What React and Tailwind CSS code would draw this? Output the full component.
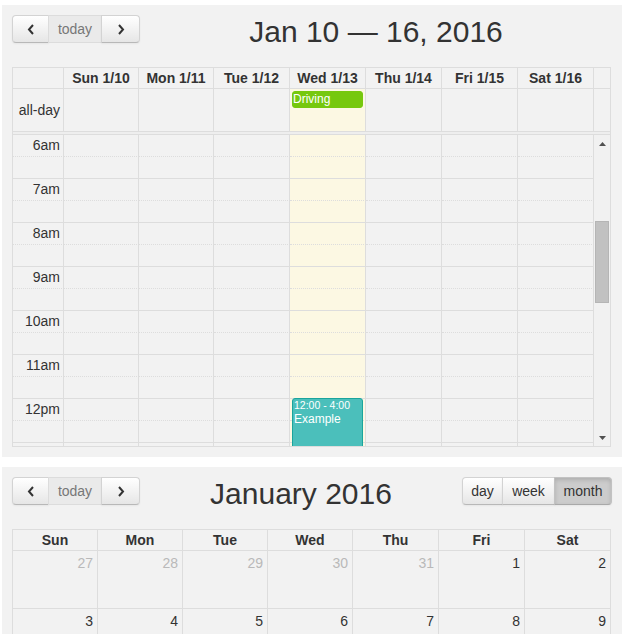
import React from "react";

const FONT = "font-['Liberation_Sans',Arial,Helvetica,sans-serif]";

function Chevron({ dir }) {
  return (
    <svg width="8" height="11" viewBox="0 0 8 11" fill="none" stroke="#333" strokeWidth="2" strokeLinejoin="miter">
      {dir === "left" ? <polyline points="6,1 2,5.5 6,10" /> : <polyline points="2,1 6,5.5 2,10" />}
    </svg>
  );
}

const btnBase = "h-[28px] flex items-center justify-center border text-[14px] leading-none";
const btnNormal =
  "bg-linear-to-b from-white to-[#e6e6e6] border-[#d3d3d3] border-b-[#b8b8b8] shadow-[inset_0_1px_0_rgba(255,255,255,0.2),0_1px_2px_rgba(0,0,0,0.05)] text-[#333]";
const btnDisabled = "bg-[#eaeaea] border-[#dcdcdc] text-[#777]";
const btnActive =
  "bg-[#cccccc] border-[#c2c2c2] border-b-[#a9a9a9] shadow-[inset_0_2px_4px_rgba(0,0,0,0.15),0_1px_2px_rgba(0,0,0,0.05)] text-[#333]";

function NavGroup() {
  return (
    <div className="flex">
      <button className={`${btnBase} ${btnNormal} w-[37px] rounded-l-[4px]`}>
        <Chevron dir="left" />
      </button>
      <button className={`${btnBase} ${btnDisabled} -ml-px w-[54px]`}>today</button>
      <button className={`${btnBase} ${btnNormal} -ml-px w-[39px] rounded-r-[4px]`}>
        <Chevron dir="right" />
      </button>
    </div>
  );
}

function ViewGroup() {
  return (
    <div className="flex">
      <button className={`${btnBase} ${btnNormal} w-[41px] rounded-l-[4px]`}>day</button>
      <button className={`${btnBase} ${btnNormal} -ml-px w-[53px]`}>week</button>
      <button className={`${btnBase} ${btnActive} -ml-px w-[58px] rounded-r-[4px]`}>month</button>
    </div>
  );
}

const weekCols = "grid grid-cols-[51px_75px_75px_76px_76px_76px_76px_76px_17px]";
const slatCols = "grid grid-cols-[51px_75px_75px_76px_76px_76px_76px_76px]";
const days = ["Sun 1/10", "Mon 1/11", "Tue 1/12", "Wed 1/13", "Thu 1/14", "Fri 1/15", "Sat 1/16"];
const hours = ["6am", "7am", "8am", "9am", "10am", "11am", "12pm", ""];

function WeekView() {
  return (
    <div className="w-[599px] border-l border-t border-[#ddd]">
      <div className={weekCols}>
        <div className="h-[21px] border-r border-b border-[#ddd]" />
        {days.map((d) => (
          <div
            key={d}
            className="h-[21px] border-r border-b border-[#ddd] text-center text-[14px] font-bold leading-[20px] text-[#333]"
          >
            {d}
          </div>
        ))}
        <div className="h-[21px] border-r border-b border-[#ddd]" />

        <div className="h-[42px] border-r border-[#ddd] flex items-center justify-end pr-[3px] text-[14px] text-[#333]">
          all-day
        </div>
        {days.map((d, i) => (
          <div key={d} className={`h-[42px] border-r border-[#ddd] ${i === 3 ? "bg-[#fcf8e3]" : ""}`}>
            {i === 3 && (
              <div className="mx-[2px] mt-[2px] h-[17px] rounded-[3px] bg-[#76c80d] border border-[#76c80d] text-white text-[12px] leading-[15px]">
                Driving
              </div>
            )}
          </div>
        ))}
        <div className="h-[42px] border-r border-[#ddd]" />
      </div>

      <div className="h-[4px] border-y border-r border-[#ddd] bg-[#eee]" />

      <div className="flex h-[312px] border-b border-[#ddd]">
        <div className="w-[581px] overflow-hidden">
          <div className={slatCols}>
            {hours.map((h, hi) => (
              <React.Fragment key={hi}>
                <div className="h-[22px] border-r border-b border-[#ddd] [border-bottom-style:dotted] text-right pr-[3px] text-[14px] leading-[21px] text-[#333]">
                  {h}
                </div>
                {days.map((d, i) => (
                  <div
                    key={d}
                    className={`h-[22px] border-r border-b border-[#ddd] [border-bottom-style:dotted] ${
                      i === 3 ? "bg-[#fcf8e3] relative" : ""
                    }`}
                  >
                    {i === 3 && h === "12pm" && (
                      <div className="absolute z-10 top-[-1px] left-[2px] w-[71px] h-[176px] rounded-[3px] bg-[#4bbfbb] border border-[#1aa59c] text-white pl-[1px]">
                        <div className="text-[10.5px] leading-[13px]">12:00 - 4:00</div>
                        <div className="text-[12px] leading-[14px]">Example</div>
                      </div>
                    )}
                  </div>
                ))}
                <div className="h-[22px] border-r border-b border-[#ddd]" />
                {days.map((d, i) => (
                  <div
                    key={d}
                    className={`h-[22px] border-r border-b border-[#ddd] ${i === 3 ? "bg-[#fcf8e3]" : ""}`}
                  />
                ))}
              </React.Fragment>
            ))}
          </div>
        </div>
        <div className="w-[17px] border-r border-[#ddd] bg-[#f1f1f1] flex flex-col">
          <div className="h-[17px] flex items-center justify-center">
            <svg width="7" height="4" viewBox="0 0 7 4">
              <polygon points="0,4 3.5,0 7,4" fill="#505050" />
            </svg>
          </div>
          <div className="mt-[69px] mx-[1px] h-[82px] bg-[#c1c1c1] border border-[#b5b5b5]" />
          <div className="flex-1" />
          <div className="h-[17px] flex items-center justify-center">
            <svg width="7" height="4" viewBox="0 0 7 4">
              <polygon points="0,0 7,0 3.5,4" fill="#505050" />
            </svg>
          </div>
        </div>
      </div>
    </div>
  );
}

const mCols = "grid grid-cols-[85px_85px_85px_85px_86px_86px_86px]";
const mDays = ["Sun", "Mon", "Tue", "Wed", "Thu", "Fri", "Sat"];
const weeks = [
  [
    { n: 27, o: true },
    { n: 28, o: true },
    { n: 29, o: true },
    { n: 30, o: true },
    { n: 31, o: true },
    { n: 1 },
    { n: 2 },
  ],
  [{ n: 3 }, { n: 4 }, { n: 5 }, { n: 6 }, { n: 7 }, { n: 8 }, { n: 9 }],
];

function MonthView() {
  return (
    <div className="w-[599px] border-l border-t border-[#ddd]">
      <div className={mCols}>
        {mDays.map((d) => (
          <div
            key={d}
            className="h-[21px] border-r border-b border-[#ddd] text-center text-[14px] font-bold leading-[20px] text-[#333]"
          >
            {d}
          </div>
        ))}
        {weeks.map((w, wi) =>
          w.map((c) => (
            <div
              key={`${wi}-${c.n}`}
              className={`h-[58px] border-r border-b border-[#ddd] text-right pr-[4px] pt-[4px] text-[14px] leading-[17px] ${
                c.o ? "text-[#b9b9b9]" : "text-[#333]"
              }`}
            >
              {c.n}
            </div>
          ))
        )}
      </div>
    </div>
  );
}

export default function App() {
  return (
    <div className={`${FONT} w-[628px] h-[634px] bg-white overflow-hidden`}>
      <div className="ml-[2px] mt-[5px] w-[620px] h-[452px] bg-[#f2f2f2] px-[10px] pt-[10px]">
        <div className="flex items-start h-[34px] mb-[18px]">
          <NavGroup />
          <h2 className="flex-1 text-center text-[30px] leading-[34px] text-[#333]">Jan 10 — 16, 2016</h2>
        </div>
        <WeekView />
      </div>
      <div className="ml-[2px] mt-[10px] w-[620px] h-[200px] bg-[#f2f2f2] px-[10px] pt-[10px]">
        <div className="flex items-start h-[34px] mb-[18px]">
          <NavGroup />
          <h2 className="flex-1 text-center text-[30px] leading-[34px] text-[#333]">January 2016</h2>
          <ViewGroup />
        </div>
        <MonthView />
      </div>
    </div>
  );
}
